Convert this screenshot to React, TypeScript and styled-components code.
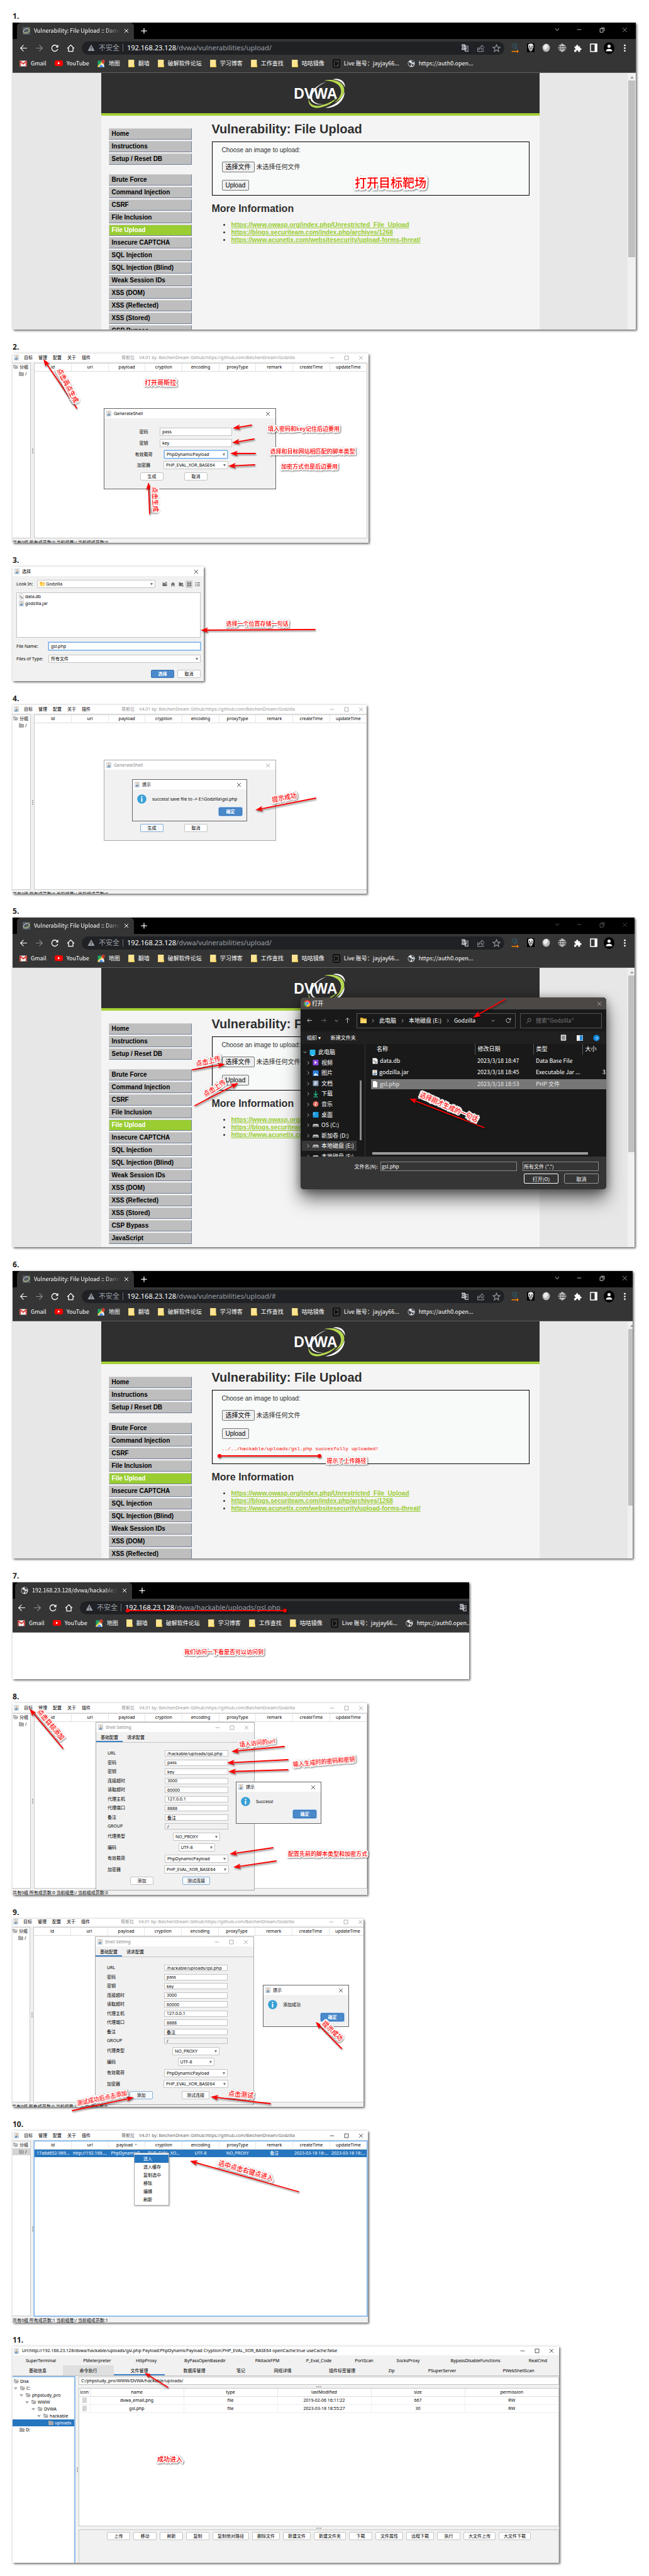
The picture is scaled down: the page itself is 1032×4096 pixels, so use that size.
import React from 'react';
import styled, { createGlobalStyle, css } from 'styled-components';

const SANS = '"Noto Sans", "Noto Sans CJK SC", sans-serif';
const NARROW = '"Noto Sans CJK SC", "Noto Sans", sans-serif';
const ARIAL = '"Liberation Sans", Arial, "Noto Sans CJK SC", sans-serif';

const Global = createGlobalStyle`
  * { box-sizing: border-box; }
  body { margin: 0; background: #fff; font-family: ${SANS}; }
  button, input, select { font: inherit; color: inherit; margin: 0; }
  svg { display: block; flex: none; }
`;

/* ---------- article ---------- */

const Article = styled.main`
  display: flex;
  flex-direction: column;
  gap: 18px;
  padding: 16px 21px 20px 20px;
`;
const StepTitle = styled.h2`
  margin: 0;
  font: bold 12px/20px ${SANS};
  color: #222;
`;
const Frame = styled.div<{ $w: number; $h: number }>`
  position: relative;
  max-width: ${p => p.$w}px;
  height: ${p => p.$h}px;
`;
const Clip = styled.div`
  position: relative;
  height: 100%;
  overflow: hidden;
  background: #fff;
  box-shadow: 2px 2px 3px rgba(0, 0, 0, 0.5), 0 0 4px rgba(0, 0, 0, 0.2);
`;
const Overlay = styled.svg`
  position: absolute;
  inset: 0;
  width: 100%;
  height: 100%;
  overflow: visible;
  pointer-events: none;
  filter: drop-shadow(1px 2px 1px rgba(0, 0, 0, 0.45));
`;
const NoteText = styled.span<{ $x: number; $y: number; $r: number; $s: number }>`
  position: absolute;
  left: ${p => p.$x}px;
  top: ${p => p.$y}px;
  transform: translate(-50%, -50%) rotate(${p => p.$r}deg);
  font: 500 ${p => p.$s}px/1 ${SANS};
  white-space: nowrap;
  color: #f00;
  -webkit-text-stroke: ${p => (p.$s > 12 ? 6 : 4)}px #fff;
  paint-order: stroke fill;
  filter: drop-shadow(1px 1px 1px rgba(0, 0, 0, 0.55));
`;

type Arrow = [number, number, number, number, number?];
type Note = [string, number, number, number?, number?];

const ArrowShape = ({ a }: { a: Arrow }) => {
  const [x1, y1, x2, y2, head = 12] = a;
  const len = Math.hypot(x2 - x1, y2 - y1);
  const deg = (Math.atan2(y2 - y1, x2 - x1) * 180) / Math.PI;
  const half = head * 0.36;
  return (
    <g transform={`translate(${x2} ${y2}) rotate(${deg})`}>
      <path d={`M${-len} 0H${-head * 0.7}`} stroke="#f00" strokeWidth="1.8" strokeLinecap="round" />
      <path d={`M0 0L${-head} ${-half}L${-head * 0.75} 0L${-head} ${half}Z`} fill="#f00" />
    </g>
  );
};

function Step({ n, w, h, arrows = [], lines = [], notes = [], children }: {
  n: number; w: number; h: number; arrows?: Arrow[]; lines?: [number, number, number][]; notes?: Note[]; children: React.ReactNode;
}) {
  return (
    <section>
      <StepTitle>{n}.</StepTitle>
      <Frame $w={w} $h={h}>
        <Clip>{children}</Clip>
        <Overlay aria-hidden="true">
          {arrows.map((a, i) => <ArrowShape key={i} a={a} />)}
          {lines.map(([x1, x2, y], i) => (
            <g key={i}>
              <path d={`M${x1} ${y}H${x2}`} stroke="#f00" strokeWidth="2" />
              <circle cx={x1} cy={y} r="3" fill="#f00" />
              <circle cx={x2} cy={y} r="3" fill="#f00" />
            </g>
          ))}
        </Overlay>
        {notes.map(([t, x, y, r = 0, s = 9]) => (
          <NoteText key={t + x} $x={x} $y={y} $r={r} $s={s}>{t}</NoteText>
        ))}
      </Frame>
    </section>
  );
}

/* ---------- browser ---------- */

const Browser = styled.div<{ $extra: number; $shift: number }>`
  display: flex;
  flex-direction: column;
  width: calc(100% + ${p => p.$extra}px);
  height: 100%;
  margin-left: ${p => -p.$shift}px;
  font-family: ${NARROW};
  color: #fff;
`;
const TabStrip = styled.div`
  display: flex;
  flex: none;
  height: 26px;
  padding-left: 7px;
  background: #000;
`;
const Tab = styled.div`
  display: flex;
  align-items: center;
  gap: 6px;
  width: 186px;
  padding: 0 8px 0 9px;
  border-radius: 6px 6px 0 0;
  background: #353535;
`;
const TabText = styled.span`
  flex: 1;
  overflow: hidden;
  white-space: nowrap;
  font-size: 9px;
  line-height: 14px;
  mask-image: linear-gradient(90deg, #000 82%, transparent 100%);
`;
const IconButton = styled.button<{ $dim?: boolean; $w?: number }>`
  display: flex;
  align-items: center;
  justify-content: center;
  flex: none;
  width: ${p => p.$w ?? 25}px;
  padding: 0;
  border: 0;
  background: none;
  color: inherit;
  opacity: ${p => (p.$dim ? 0.45 : 1)};
`;
const StripControls = styled.div<{ $dim?: boolean }>`
  display: flex;
  height: 22px;
  margin-left: auto;
  opacity: ${p => (p.$dim ? 0.45 : 1)};
`;
const Toolbar = styled.div`
  display: flex;
  flex: none;
  align-items: center;
  height: 28px;
  padding-left: 5px;
  padding-right: 5px;
  background: #353535;
`;
const Omnibox = styled.div`
  display: flex;
  flex: 1;
  align-items: center;
  height: 21px;
  margin: 0 4px 0 5px;
  padding-left: 9px;
  border-radius: 11px;
  background: #202124;
  color: #9aa0a6;
  font: 11px/16px ${SANS};
`;
const Insecure = styled.span`
  margin: 0 6px 0 6px;
  padding-right: 5px;
  border-right: 1px solid #6b6e72;
  line-height: 12px;
  white-space: nowrap;
`;
const Url = styled.span`
  flex: 1;
  white-space: nowrap;
  b { font-weight: 400; color: #fff; }
`;
const Bookmarks = styled.nav`
  display: flex;
  flex: none;
  align-items: center;
  gap: 13px;
  height: 26px;
  padding: 0 0 4px 11px;
  border-bottom: 1px solid #5f5f5f;
  background: #353535;
  font-size: 9px;
  line-height: 14px;
  a { display: flex; align-items: center; gap: 6px; color: #fff; text-decoration: none; white-space: nowrap; }
`;
const Viewport = styled.div`
  display: flex;
  flex: 1;
  min-height: 0;
  overflow: hidden;
  background: #e7e7e7;
`;
const Scrollbar = styled.div`
  position: relative;
  flex: none;
  width: 13px;
  background: #f1f1f1;
  padding: 12px 1px 0;
  &::before {
    content: '';
    position: absolute;
    top: 5px;
    left: 4px;
    border: 3px solid transparent;
    border-top: 0;
    border-bottom: 4px solid #a3a3a3;
  }
`;
const Thumb = styled.div<{ $h: number }>`
  height: ${p => p.$h}px;
  background: #c1c1c1;
`;

const I = ({ s = 12, vb = 24, children, w = 2 }: { s?: number; vb?: number; children: React.ReactNode; w?: number }) => (
  <svg width={s} height={s} viewBox={`0 0 ${vb} ${vb}`} fill="none" stroke="currentColor" strokeWidth={w} aria-hidden="true">{children}</svg>
);
const Back = () => <I s={13}><path d="M22 12H4M12 3l-9 9 9 9" /></I>;
const Forward = () => <I s={13}><path d="M2 12h18M12 3l9 9-9 9" /></I>;
const Reload = () => <I s={13} w={2.5}><path d="M20 15a9 9 0 1 1-2-9l2 2" /><path d="M21.500 2v8h-8z" fill="currentColor" stroke="none" /></I>;
const HomeIcon = () => <I s={13} w={2.4}><path d="M2 13L12 3l10 10M5.500 11v10.500h13V11" /></I>;
const WarnIcon = () => <I s={12}><path d="M12 2L1 22h22z" fill="currentColor" stroke="none" /><path d="M12 9v6M12 17v2.500" stroke="#202124" strokeWidth="2.500" /></I>;
const CloseX = ({ s = 8, w = 2 }: { s?: number; w?: number }) => <I s={s} w={w}><path d="M3 3l18 18M21 3L3 21" /></I>;
const MinIcon = () => <I s={8}><path d="M2 12h20" /></I>;
const MaxIcon = () => <I s={8}><path d="M3 3h18v18H3z" /></I>;
const RestoreIcon = () => <I s={9}><path d="M3 7h13v15H3zM8 3h13v14" /></I>;
const Chevron = () => <I s={8}><path d="M3 6l9 12 9-12" /></I>;
const GlobeIcon = () => (
  <svg width="12" height="12" viewBox="0 0 24 24" aria-hidden="true"><circle cx="12" cy="12" r="11" fill="#dfe1e5" /><path d="M3 7c5 0 4 4 8 4s2 5 0 6-1 4-3 4C4 19 1 14 3 7zM13 2c4 0 7 3 8 6-3 2-6 1-7-1s-3-3-1-5zM15 14c3-2 5 0 5 1s-3 5-5 5-2-4 0-6z" fill="#3c4043" /></svg>
);
const DvwaFav = () => (
  <svg width="12" height="12" viewBox="0 0 24 24" aria-hidden="true"><path fill="#555c66" d="M0 0h24v24H0z" /><ellipse cx="12" cy="12" rx="10" ry="7" transform="rotate(-24 12 12)" fill="none" stroke="#dfe3dc" strokeWidth="1.600" /><path d="M4 17c4 4 14 0 17-6 2-4 0-6-4-6" fill="none" stroke="#a5c940" strokeWidth="1.600" /></svg>
);
const FolderMark = () => (
  <svg width="10" height="12" viewBox="0 0 18 22" aria-hidden="true"><path d="M0 0h17v15h1v6H0z" fill="#ffe591" /><path d="M0 21h18v-6h-3v4" fill="none" stroke="#f0c63a" strokeWidth="1.500" /></svg>
);
const GmailIcon = () => (
  <svg width="12" height="10" viewBox="0 0 24 20" aria-hidden="true"><path d="M1 1h22v18H1z" fill="#f2f2f2" /><path d="M2.500 19V3L12 11l9.500-8v16" fill="none" stroke="#d93a30" strokeWidth="3.500" /></svg>
);
const YoutubeIcon = () => (
  <svg width="13" height="9" viewBox="0 0 26 18" aria-hidden="true"><rect width="26" height="18" rx="5" fill="#f00" /><path d="M10 5l7 4-7 4z" fill="#fff" /></svg>
);
const MapsIcon = () => (
  <svg width="12" height="12" viewBox="0 0 24 24" aria-hidden="true"><path fill="#1fa463" d="M1 3h20v20H1z" /><path fill="#fff" d="M1 23L18 6l4 17zM6 23l6-7 6 7z" /><path fill="#4285f4" d="M4 23l8-8 8 8z" /><path fill="#ffd04b" d="M1 23V19L14 7l3 3L3 23z" /><path d="M18 0a5 5 0 0 1 5 5c0 4-4 5-5 11-1-6-5-7-5-11a5 5 0 0 1 5-5z" fill="#ea4335" /><circle cx="18" cy="5" r="2" fill="#8b1a12" /></svg>
);
const LiveIcon = () => (
  <svg width="12" height="14" viewBox="0 0 24 28" fill="none" stroke="#000" strokeWidth="2.500" aria-hidden="true"><rect x="1.500" y="1.500" width="21" height="25" rx="3" /><path d="M9 9l7 5-7 5z" /></svg>
);
const TranslateIcon = () => (
  <svg width="13" height="13" viewBox="0 0 24 24" aria-hidden="true"><path d="M2 1h10l2 4h8v17H12l-2-5H2z" fill="#bdc1c6" /><path d="M14 7h7v13h-8l2-3z" fill="#202124" /><path d="M9 7a3.500 3.500 0 1 0 .5 3H7" fill="none" stroke="#202124" strokeWidth="1.600" /><path d="M14 11h6M17 9v2c0 3-2 4-3 5M15 12c1 2 3 4 5 5" fill="none" stroke="#bdc1c6" strokeWidth="1.400" /></svg>
);
const ShareIcon = () => <I s={13} w={1.800}><path d="M3 10v12h17v-5M6 17c0-6 3-9 9-9V3l7 7.500-7 7v-5c-4 0-7 1-9 4.500z" /></I>;
const StarIcon = () => <I s={13} w={2}><path d="M12 2l3 7 7.500.5-6 5 2 7.500-6.500-4-6.500 4 2-7.500-6-5L9 9z" /></I>;
const ParagraphIcon = () => (
  <svg width="12" height="15" viewBox="0 0 24 30" aria-hidden="true"><path d="M8 19V12a5 5 0 0 1 0-10h9v17M13 2v17" fill="none" stroke="#33505c" strokeWidth="3" /><path d="M1 24h17v-4l6 5.500-6 5.500v-4H1z" fill="#ff8000" /></svg>
);
const MaskIcon = () => (
  <svg width="12" height="14" viewBox="0 0 24 28" aria-hidden="true"><path fill="#000" d="M0 0h24v28H0z" /><path d="M4 4c4-4 12-4 16 0 1 8-1 16-8 23C5 20 3 12 4 4z" fill="#f3f3f3" /><path d="M6 8l4 1M18 8l-4 1M6 12h4M14 12h4M12 12v5M6 18c3-2 4 0 6 0s3-2 6 0M12 20v5" stroke="#000" strokeWidth="1.800" fill="none" /></svg>
);
const BallIcon = () => (
  <svg width="13" height="14" viewBox="0 0 24 26" aria-hidden="true"><ellipse cx="12" cy="13" rx="11" ry="12" fill="#b9b9b9" /><path d="M4 8c3-5 9-7 12-5-1 4 3 5 1 8s-4 2-4 7c-4 2-9-1-9-10z" fill="#ededed" /></svg>
);
const NetIcon = () => <I s={14} w={1.400}><circle cx="12" cy="12" r="10" strokeDasharray="2 1.500" /><path d="M12 1v22M2 12h20M4 6h16M4 18h16" /><ellipse cx="12" cy="12" rx="5" ry="10" /></I>;
const PuzzleIcon = () => <I s={13}><path d="M3 7h5c-2-6 7-6 5.500 0H19v5c6-1.500 6 7 0 5.500V23h-5c1-6-7-6-6 0H2v-6c5 1 5-6 1-5z" fill="currentColor" stroke="none" /></I>;
const PanelIcon = () => <svg width="12" height="14" viewBox="0 0 24 28" aria-hidden="true"><path d="M2 2h20v24H2z" fill="none" stroke="#fff" strokeWidth="3" /><path d="M15 2h8v24h-8z" fill="#fff" /></svg>;
const AvatarIcon = () => (
  <svg width="17" height="19" viewBox="0 0 34 38" aria-hidden="true"><ellipse cx="17" cy="19" rx="17" ry="19" fill="#000" /><circle cx="17" cy="13" r="5" fill="#fff" /><path d="M7 29c0-10 20-10 20 0z" fill="#fff" /></svg>
);
const DotsIcon = () => <I s={13}><g fill="currentColor" stroke="none"><circle cx="12" cy="4" r="2.500" /><circle cx="12" cy="12" r="2.500" /><circle cx="12" cy="20" r="2.500" /></g></I>;

const bookmarks: [React.ReactNode, string][] = [
  [<GmailIcon />, 'Gmail'], [<YoutubeIcon />, 'YouTube'], [<MapsIcon />, '地图'], [<FolderMark />, '翻墙'],
  [<FolderMark />, '破解软件论坛'], [<FolderMark />, '学习博客'], [<FolderMark />, '工作查找'], [<FolderMark />, '咕咕镜像'],
  [<LiveIcon />, 'Live  账号：jayjay66...'], [<GlobeIcon />, 'https://auth0.open...'],
];

function Chrome({ title, path, extra = 0, shift = 0, dim, icon = <DvwaFav />, thumb, children }: {
  title: string; path: string; extra?: number; shift?: number; dim?: boolean; icon?: React.ReactNode; thumb?: number; children?: React.ReactNode;
}) {
  return (
    <Browser $extra={extra} $shift={shift}>
      <TabStrip>
        <Tab>{icon}<TabText>{title}</TabText><IconButton $w={8} aria-label="Close tab"><CloseX w={3} /></IconButton></Tab>
        <IconButton $w={31} aria-label="New tab"><I s={10} w={3}><path d="M12 1v22M1 12h22" /></I></IconButton>
        <StripControls $dim={dim}>
          <IconButton $w={35} aria-label="Search tabs"><Chevron /></IconButton>
          <IconButton $w={36} aria-label="Minimize"><MinIcon /></IconButton>
          <IconButton $w={36} aria-label="Restore"><RestoreIcon /></IconButton>
          <IconButton $w={36} aria-label="Close"><CloseX s={9} w={1.500} /></IconButton>
        </StripControls>
      </TabStrip>
      <Toolbar>
        <IconButton aria-label="Back"><Back /></IconButton>
        <IconButton $dim aria-label="Forward"><Forward /></IconButton>
        <IconButton aria-label="Reload"><Reload /></IconButton>
        <IconButton aria-label="Home"><HomeIcon /></IconButton>
        <Omnibox>
          <WarnIcon /><Insecure>不安全</Insecure><Url><b>192.168.23.128</b>{path}</Url>
          <IconButton aria-label="Translate"><TranslateIcon /></IconButton>
          <IconButton aria-label="Share"><ShareIcon /></IconButton>
          <IconButton aria-label="Bookmark"><StarIcon /></IconButton>
        </Omnibox>
        {[<ParagraphIcon />, <MaskIcon />, <BallIcon />, <NetIcon />, <PuzzleIcon />, <PanelIcon />, <AvatarIcon />, <DotsIcon />].map((ic, i) => (
          <IconButton key={i} aria-label={`Extension ${i + 1}`}>{ic}</IconButton>
        ))}
      </Toolbar>
      <Bookmarks>{bookmarks.map(([ic, t], i) => <a key={i} href="#bookmark">{ic}{t}</a>)}</Bookmarks>
      {children && <Viewport>{children}{thumb && <Scrollbar><Thumb $h={thumb} /></Scrollbar>}</Viewport>}
    </Browser>
  );
}

/* ---------- DVWA page ---------- */

const DvwaColumn = styled.div`
  flex: 1;
  max-width: 697px;
  margin: 0 auto;
  height: 600px;
  background: #f4f4f4;
  font: 10px/12px ${ARIAL};
  color: #2f2f2f;
`;
const DvwaHeader = styled.header`
  display: flex;
  align-items: center;
  justify-content: center;
  height: 68px;
  border-bottom: 4px solid #a4cf35;
  background: #2f2f2f;
`;
const DvwaBody = styled.div`
  display: flex;
  gap: 32px;
  padding: 0 16px 0 12px;
`;
const Side = styled.nav`
  display: flex;
  flex: none;
  flex-direction: column;
  gap: 15px;
  width: 132px;
  padding-top: 20px;
`;
const SideGroup = styled.div`
  display: flex;
  flex-direction: column;
  gap: 2px;
`;
const SideLink = styled.a<{ $on?: boolean }>`
  height: 18px;
  padding-left: 4px;
  border: 1px solid;
  border-color: #cfcfcf #75809b #75809b #cfcfcf;
  background: ${p => (p.$on ? '#9acd32' : '#bebebe')};
  color: ${p => (p.$on ? '#fff' : '#000')};
  font: bold 10px/16px ${ARIAL};
  text-decoration: none;
`;
const Main = styled.div`
  flex: 1;
  padding-top: 9px;
  h1 { margin: 0 0 8px; font-size: 20px; line-height: 24px; }
  h2 { margin: 11px 0 10px; font-size: 16px; line-height: 20px; }
  ul { margin: 0; padding-left: 31px; }
  li a { color: #9acd32; font-weight: bold; }
`;
const UploadBox = styled.form<{ $tall?: boolean }>`
  display: flex;
  flex-direction: column;
  align-items: flex-start;
  gap: 12px;
  padding: 7px 15px ${p => (p.$tall ? 19 : 7)}px;
  border: 1px solid #000;
  background: #f8faf9;
`;
const plate = css`
  display: inline-block;
  height: 17px;
  padding: 0 5px;
  border: 1px solid #767676;
  border-radius: 2px;
  background: #efefef;
  color: #000;
  font: 10px/15px ${ARIAL};
`;
const FileRow = styled.div`
  display: flex;
  align-items: center;
  gap: 3px;
  white-space: nowrap;
  label { ${plate} }
  input { position: absolute; width: 1px; height: 1px; opacity: 0; }
`;
const UploadButton = styled.button`${plate}`;
const Result = styled.output`
  font: 8px/8px "Liberation Mono", monospace;
  color: #f00;
  white-space: nowrap;
`;

const Logo = () => (
  <svg width="93" height="57" viewBox="0 0 540 330" role="img" aria-label="DVWA">
    <path d="M330 58C240 80 175 150 176 205c2 45 60 68 125 62-60-2-105-22-108-62C190 150 250 85 330 58z" fill="#fff" />
    <path d="M300 48c90-22 188 5 190 85 1 50-40 95-92 118 40-30 66-72 62-112-6-62-76-92-160-91z" fill="#b5d84f" />
    <path d="M160 215c12 60 60 72 110 62 70-14 130-50 160-78-40 55-110 92-180 100-60 5-96-30-90-84z" fill="#b5d84f" />
    <path d="M385 36c50-18 116 10 112 74-16-44-56-70-112-74zM493 150c2 80-80 155-178 148 90-22 150-70 178-148z" fill="#fff" />
    <text x="24" y="213" fontFamily="Liberation Sans, Arial, sans-serif" fontWeight="700" fontSize="134" fill="#fff">DVWA</text>
  </svg>
);

const sideTop = ['Home', 'Instructions', 'Setup / Reset DB'];
const sideMain = ['Brute Force', 'Command Injection', 'CSRF', 'File Inclusion', 'File Upload', 'Insecure CAPTCHA', 'SQL Injection',
  'SQL Injection (Blind)', 'Weak Session IDs', 'XSS (DOM)', 'XSS (Reflected)', 'XSS (Stored)', 'CSP Bypass', 'JavaScript'];
const links = ['https://www.owasp.org/index.php/Unrestricted_File_Upload', 'https://blogs.securiteam.com/index.php/archives/1268',
  'https://www.acunetix.com/websitesecurity/upload-forms-threat/'];

function Dvwa({ id, result }: { id: string; result?: string }) {
  return (
    <DvwaColumn>
      <DvwaHeader><Logo /></DvwaHeader>
      <DvwaBody>
        <Side>
          {[sideTop, sideMain].map((g, i) => (
            <SideGroup key={i}>{g.map(t => <SideLink key={t} href="#page" $on={t === 'File Upload'}>{t}</SideLink>)}</SideGroup>
          ))}
        </Side>
        <Main>
          <h1>Vulnerability: File Upload</h1>
          <UploadBox $tall={!!result} onSubmit={e => e.preventDefault()}>
            <span>Choose an image to upload:</span>
            <FileRow><label htmlFor={id}>选择文件</label><input id={id} type="file" /><span>未选择任何文件</span></FileRow>
            <UploadButton type="submit">Upload</UploadButton>
            {result && <Result>{result}</Result>}
          </UploadBox>
          <h2>More Information</h2>
          <ul>{links.map(l => <li key={l}><a href={l}>{l}</a></li>)}</ul>
        </Main>
      </DvwaBody>
    </DvwaColumn>
  );
}

/* ---------- Swing widgets ---------- */

const JavaIcon = () => (
  <svg width="8" height="9" viewBox="0 0 16 18" aria-hidden="true"><rect x=".5" y=".5" width="15" height="17" rx="2" fill="#e4ebf1" stroke="#8fa3b5" /><path d="M9 2c-4 3 1 4-2 7M11 5c-3 2 0 3-2 4" stroke="#e9801a" strokeWidth="1.500" fill="none" /><path d="M4 11h7M4 13h7M3 15.500h9M11 10c3 0 2 3 0 3" stroke="#3f6b93" strokeWidth="1.300" fill="none" /></svg>
);
const FolderIcon = ({ open }: { open?: boolean }) => (
  <svg width="8" height="7" viewBox="0 0 16 14" fill="#aaa" aria-hidden="true">
    {open ? <path d="M0 0h6l2 2h6v2H4L1 11H0zM5 5h11l-2.500 8H2z" /> : <path d="M0 0h6l2 2h8v12H0z" />}
  </svg>
);

const Window = styled.div<{ $extra: number; $dx: number; $dy: number }>`
  display: flex;
  flex-direction: column;
  width: calc(100% + ${p => p.$extra}px);
  margin: ${p => p.$dy}px 0 0 ${p => p.$dx}px;
  background: #f1f1f1;
  color: #000;
  font: 7px/11px ${SANS};
`;
const WindowBar = styled.div<{ $h?: number }>`
  display: flex;
  align-items: center;
  height: ${p => p.$h ?? 13}px;
  padding-left: 2px;
  background: #fff;
`;
const MenuBar = styled.div`
  display: flex;
  gap: 9px;
  width: 163px;
  padding-left: 8px;
`;
const Plain = styled.button`
  padding: 0;
  border: 0;
  background: none;
  font: 7px/11px ${SANS};
  white-space: nowrap;
`;
const WindowTitle = styled.span<{ $c?: string; $left?: number }>`
  margin-left: ${p => p.$left ?? 0}px;
  font: 7px/12px ${SANS};
  color: ${p => p.$c ?? '#999'};
  white-space: pre;
`;
const Controls = styled.div<{ $gap?: number; $c?: string }>`
  display: flex;
  gap: ${p => p.$gap ?? 15}px;
  margin-left: auto;
  padding-right: 8px;
  color: ${p => p.$c ?? '#888'};
`;
const Panes = styled.div`
  display: flex;
  height: 279px;
  margin-top: 2px;
  padding-right: 2px;
`;
const Tree = styled.ul`
  width: 29px;
  margin: 0;
  padding: 0;
  border: 1px solid #c8c8c8;
  border-left: 0;
  background: #fff;
  list-style: none;
`;
const TreeRow = styled.li<{ $in?: number; $bg?: string; $c?: string }>`
  display: flex;
  align-items: center;
  gap: 2px;
  height: 11px;
  padding-left: ${p => p.$in ?? 1}px;
  background: ${p => p.$bg ?? 'none'};
  color: ${p => p.$c ?? 'inherit'};
  white-space: nowrap;
`;
const Splitter = styled.div`
  display: flex;
  align-items: center;
  justify-content: center;
  width: 5px;
  color: #aaa;
`;
const Grips = ({ across }: { across?: boolean }) => across
  ? <svg width="8" height="2" viewBox="0 0 8 2" fill="#aaa" aria-hidden="true"><path d="M0 0h2v2H0zM3 0h2v2H3zM6 0h2v2H6z" /></svg>
  : <svg width="2" height="8" viewBox="0 0 2 8" fill="#aaa" aria-hidden="true"><path d="M0 0h2v2H0zM0 3h2v2H0zM0 6h2v2H0z" /></svg>;
const TablePane = styled.div<{ $focus?: boolean }>`
  flex: 1;
  overflow: hidden;
  border: 1px solid ${p => (p.$focus ? '#7db0e8' : '#c8c8c8')};
  box-shadow: ${p => (p.$focus ? '0 0 0 1px #a9cdf2' : 'none')};
  background: #fff;
`;
const Table = styled.table`
  width: 100%;
  border-collapse: collapse;
  table-layout: fixed;
  font: 7px/11px ${SANS};
  text-align: center;
  th { height: 12px; padding: 0; border-bottom: 1px solid #ddd; border-right: 1px solid #e6e6e6; font-weight: 400; }
  td { height: 13px; padding: 0 1px; overflow: hidden; text-overflow: ellipsis; white-space: nowrap; }
  tr > :last-child { border-right: 0; }
`;
const SelectedRow = styled.tr`
  background: #2675bf;
  color: #fff;
`;
const SortMark = styled.i`
  display: inline-block;
  margin-left: 3px;
  vertical-align: 2px;
  border: 2px solid transparent;
  border-top: 0;
  border-bottom: 3px solid #aaa;
`;
const Status = styled.div`
  height: 14px;
  font-size: 7px;
  line-height: 14px;
  white-space: nowrap;
`;

const cols = ['id', 'url', 'payload', 'cryption', 'encoding', 'proxyType', 'remark', 'createTime', 'updateTime'];
const shellRow = ['17a6d652-989...', 'http://192.168....', 'PhpDynamicP...', 'PHP_EVAL_XO...', 'UTF-8', 'NO_PROXY', '备注', '2023-03-18 18:...', '2023-03-18 18:...'];

function Godzilla({ extra = 0, dx = 0, dy = 0, active, members = 0, children }: {
  extra?: number; dx?: number; dy?: number; active?: boolean; members?: number; children?: React.ReactNode;
}) {
  return (
    <>
      <Window $extra={extra} $dx={dx} $dy={dy}>
        <WindowBar>
          <JavaIcon />
          <MenuBar>{['目标', '管理', '配置', '关于', '插件'].map(t => <Plain key={t}>{t}</Plain>)}</MenuBar>
          <WindowTitle $c={active ? '#666' : '#999'}>{'哥斯拉    V4.01 by: BeichenDream Github:https://github.com/BeichenDream/Godzilla'}</WindowTitle>
          <Controls $c={active ? '#000' : '#888'}><MinIcon /><MaxIcon /><CloseX /></Controls>
        </WindowBar>
        <Panes>
          <Tree>
            <TreeRow><FolderIcon open />分组</TreeRow>
            <TreeRow $in={10} $bg={active ? '#d4d4d4' : undefined}><FolderIcon />/</TreeRow>
          </Tree>
          <Splitter><Grips /></Splitter>
          <TablePane $focus={active}>
            <Table>
              <thead><tr>{cols.map(c => <th key={c} scope="col">{c}{active && c === 'payload' && <SortMark />}</th>)}</tr></thead>
              {active && <tbody><SelectedRow>{shellRow.map((c, i) => <td key={i}>{c}</td>)}</SelectedRow></tbody>}
            </Table>
          </TablePane>
        </Panes>
        <Status>共有0组 所有成员数:{members} 当前组是:/ 当前组成员数:{members}</Status>
      </Window>
      {children}
    </>
  );
}

const DialogBox = styled.div<{ $x: number; $y: number; $w: number; $h: number; $strong?: boolean }>`
  position: absolute;
  left: ${p => p.$x}px;
  top: ${p => p.$y}px;
  display: flex;
  flex-direction: column;
  width: ${p => p.$w}px;
  height: ${p => p.$h}px;
  border: 1px solid ${p => (p.$strong ? '#666' : '#aaa')};
  background: #f1f1f1;
  color: #000;
  font: 7px/11px ${SANS};
`;
const DialogBar = styled(WindowBar)`
  flex: none;
  padding-left: 3px;
`;
function Dialog({ title, x, y, w, h, muted, full, children }: {
  title: string; x: number; y: number; w: number; h: number; muted?: boolean; full?: boolean; children: React.ReactNode;
}) {
  return (
    <DialogBox role="dialog" aria-label={title} $x={x} $y={y} $w={w} $h={h} $strong={!muted}>
      <DialogBar $h={15}>
        <JavaIcon /><WindowTitle $left={4} $c={muted ? '#888' : '#000'}>{title}</WindowTitle>
        <Controls $c={muted ? '#888' : '#000'}>{full && <><MinIcon /><MaxIcon /></>}<CloseX /></Controls>
      </DialogBar>
      {children}
    </DialogBox>
  );
}

const Field = styled.input<{ $h?: number; $focus?: boolean }>`
  width: 100%;
  height: ${p => p.$h ?? 13}px;
  padding: 0 3px;
  border: 1px solid ${p => (p.$focus ? '#7db0e8' : '#c4c4c4')};
  box-shadow: ${p => (p.$focus ? '0 0 0 1px #a9cdf2' : 'none')};
  outline: 0;
  background: #fff;
  font: 7px/8px ${SANS};
  &:disabled { background: #f1f1f1; color: #000; }
`;
const SelectWrap = styled.span<{ $w?: number; $focus?: boolean }>`
  position: relative;
  display: block;
  width: ${p => (p.$w ? `${p.$w}px` : '100%')};
  &::after {
    content: '';
    position: absolute;
    right: 4px;
    top: 5px;
    border: 2px solid transparent;
    border-bottom: 0;
    border-top: 4px solid #777;
  }
  select {
    display: block;
    width: 100%;
    height: 13px;
    padding: 0 3px;
    appearance: none;
    outline: 0;
    border: 1px solid ${p => (p.$focus ? '#7db0e8' : '#c4c4c4')};
    box-shadow: ${p => (p.$focus ? '0 0 0 1px #a9cdf2' : 'none')};
    border-radius: 1px;
    background: #fff;
    font: 7px/11px ${SANS};
  }
`;
const Select = ({ id, value, w, focus, label }: { id?: string; value: string; w?: number; focus?: boolean; label?: string }) => (
  <SelectWrap $w={w} $focus={focus}><select id={id} aria-label={label} defaultValue={value}><option>{value}</option></select></SelectWrap>
);
const Btn = styled.button<{ $w?: number; $primary?: boolean; $ring?: boolean; $focus?: boolean }>`
  min-width: ${p => p.$w ?? 37}px;
  height: 13px;
  padding: 0 7px;
  border: 1px solid ${p => (p.$primary ? '#3d75b3' : p.$focus ? '#89b0d4' : '#c4c4c4')};
  border-radius: 2px;
  background: ${p => (p.$primary ? '#4a89ca' : p.$focus ? '#f5f9fd' : '#fff')};
  box-shadow: ${p => (p.$ring ? '0 0 0 1px #97c3f3' : 'none')};
  color: ${p => (p.$primary ? '#fff' : '#000')};
  font: ${p => (p.$primary ? 700 : 400)} 7px/11px ${SANS};
  white-space: nowrap;
`;

const GenGrid = styled.form`
  display: grid;
  grid-template-columns: 49px 117px;
  align-content: space-between;
  align-items: center;
  justify-items: center;
  column-gap: 0;
  height: 84px;
  margin: 15px 0 0 38px;
`;
const GenLabel = styled.label`white-space: nowrap;`;
const GenInputCell = styled.div`width: 115px;`;
const GenButtons = styled.div`
  grid-column: 1 / -1;
  display: flex;
  gap: 33px;
  width: 127px;
  margin-right: 1px;
`;
const Spacer = styled.div`flex: 1;`;
const BottomButtons = styled.div`
  display: flex;
  gap: 33px;
  padding: 0 0 13px 57px;
`;

const TipBody = styled.div`
  display: flex;
  gap: 9px;
  align-items: center;
  padding: 8px 0 0 7px;
  font: 7px/12px ${SANS};
  white-space: nowrap;
`;
const TipActions = styled.div`
  display: flex;
  justify-content: flex-end;
  margin-top: auto;
  padding: 0 7px 8px 0;
`;
const Info = () => (
  <svg width="15" height="15" viewBox="0 0 30 30" aria-hidden="true"><circle cx="15" cy="15" r="14.500" fill="#389fd6" /><path d="M13 6h4v4h-4zM13 12h4v12h-4z" fill="#fff" /></svg>
);
const Tip = ({ x, y, w, text }: { x: number; y: number; w: number; text: string }) => (
  <Dialog title="提示" x={x} y={y} w={w} h={67}>
    <TipBody><Info />{text}</TipBody>
    <TipActions><Btn $primary $ring>确定</Btn></TipActions>
  </Dialog>
);

/* ---------- step 3: file chooser ---------- */

const Chooser = styled.div`
  display: flex;
  flex-direction: column;
  height: 100%;
  background: #f1f1f1;
  font: 7px/11px ${SANS};
`;
const ChooserBody = styled.div`
  display: flex;
  flex: 1;
  flex-direction: column;
  gap: 7px;
  padding: 6px 5px 5px 6px;
`;
const ChooserRow = styled.div<{ $label?: number }>`
  display: flex;
  align-items: center;
  label { flex: none; width: ${p => p.$label ?? 51}px; }
`;
const FolderSelect = styled.div`
  position: relative;
  width: 188px;
  select { padding-left: 13px; }
  > svg { position: absolute; z-index: 1; left: 4px; top: 3px; }
`;
const ToolIcons = styled.div`
  display: flex;
  gap: 2px;
  margin-left: auto;
`;
const ToolIcon = styled.button<{ $on?: boolean }>`
  display: flex;
  align-items: center;
  justify-content: center;
  width: 11px;
  height: 12px;
  padding: 0;
  border: 0;
  border-radius: 2px;
  background: ${p => (p.$on ? '#cfcfcf' : 'none')};
`;
const FileList = styled.ul`
  flex: 1;
  margin: 0;
  padding: 0 3px;
  border: 1px solid #c4c4c4;
  background: #fff;
  list-style: none;
  li { display: flex; align-items: center; gap: 2px; height: 11px; }
`;
const ChooserActions = styled.div`
  display: flex;
  justify-content: flex-end;
  gap: 5px;
  padding-top: 4px;
`;
const DbIcon = ({ s = 8 }: { s?: number }) => <svg width={s} height={s + 1} viewBox="0 0 16 18" aria-hidden="true"><path d="M1 1h10l4 4v12H1z" fill="#fff" stroke="#999" /><circle cx="6" cy="9" r="2" fill="none" stroke="#667" strokeWidth="1.600" /><circle cx="10" cy="13" r="2" fill="none" stroke="#667" strokeWidth="1.600" /></svg>;
const YellowFolder = ({ s = 8 }: { s?: number }) => <svg width={s} height={s - 1} viewBox="0 0 16 14" aria-hidden="true"><path d="M0 0h6l2 2h8v12H0z" fill="#f5b83d" /><path d="M0 5h16v9H0z" fill="#ffd869" /></svg>;
const G = ({ d }: { d: string }) => <svg width="8" height="8" viewBox="0 0 16 16" aria-hidden="true"><path d={d} fill="#6e6e6e" /></svg>;

function FileChooser() {
  return (
    <Chooser>
      <DialogBar $h={15}><JavaIcon /><WindowTitle $left={4} $c="#000">选择</WindowTitle><Controls $c="#000"><CloseX /></Controls></DialogBar>
      <ChooserBody>
        <ChooserRow $label={33}>
          <label htmlFor="look-in">Look In:</label>
          <FolderSelect><YellowFolder /><Select id="look-in" value="Godzilla" /></FolderSelect>
          <ToolIcons>
            <ToolIcon aria-label="Up"><G d="M1 3h5l1 2h3v4h3V6h2v8H1zM12 0l4 4h-3v4h-2V4H8z" /></ToolIcon>
            <ToolIcon aria-label="Home"><G d="M8 1l7 7h-2v7h-3v-4H6v4H3V8H1z" /></ToolIcon>
            <ToolIcon aria-label="New folder"><G d="M1 2h5l2 2h6v5h-3v2H9v3H1zM12 10h2v2h2v2h-2v2h-2v-2h-2v-2h2z" /></ToolIcon>
            <ToolIcon $on aria-label="List"><G d="M2 2h5v5H2zM9 2h5v5H9zM2 9h5v5H2zM9 9h5v5H9z" /></ToolIcon>
            <ToolIcon aria-label="Details"><G d="M0 2h3v2H0zM5 2h11v2H5zM0 7h3v2H0zM5 7h11v2H5zM0 12h3v2H0zM5 12h11v2H5z" /></ToolIcon>
          </ToolIcons>
        </ChooserRow>
        <FileList><li><DbIcon />data.db</li><li><JavaIcon />godzilla.jar</li></FileList>
        <ChooserRow><label htmlFor="file-name">File Name:</label><Field id="file-name" $focus defaultValue="gsl.php" /></ChooserRow>
        <ChooserRow><label htmlFor="file-type">Files of Type:</label><Select id="file-type" value="所有文件" /></ChooserRow>
        <ChooserActions><Btn $primary>选择</Btn><Btn>取消</Btn></ChooserActions>
      </ChooserBody>
    </Chooser>
  );
}

/* ---------- step 5: system open dialog ---------- */

const OpenDialog = styled.div`
  position: absolute;
  left: 458px;
  top: 127px;
  display: flex;
  flex-direction: column;
  width: 486px;
  height: 305px;
  overflow: hidden;
  border-radius: 5px;
  background: #191919;
  color: #fff;
  font: 9px/14px ${NARROW};
`;
const OpenShadow = styled.div`
  position: absolute;
  left: 458px;
  top: 127px;
  width: 486px;
  height: 305px;
  border-radius: 5px;
  box-shadow: 0 16px 28px rgba(0, 0, 0, 0.55), 0 2px 14px rgba(0, 0, 0, 0.4);
`;
const OpenBar = styled.div`
  display: flex;
  flex: none;
  align-items: center;
  gap: 2px;
  height: 19px;
  padding: 0 7px 0 5px;
  background: #4b4845;
  button { margin-left: auto; }
`;
const OpenNav = styled.div`
  display: flex;
  flex: none;
  align-items: center;
  height: 35px;
  padding: 0 7px 0 4px;
`;
const PathBox = styled.div`
  display: flex;
  flex: 1;
  align-items: center;
  gap: 7px;
  height: 24px;
  margin: 0 7px 0 5px;
  padding-left: 5px;
  border: 1px solid #555;
  white-space: nowrap;
  span:nth-of-type(4) { margin-right: auto; }
`;
const SearchBox = styled.label`
  display: flex;
  align-items: center;
  gap: 6px;
  width: 130px;
  height: 24px;
  padding-left: 8px;
  border: 1px solid #555;
  color: #888;
  input { width: 90px; padding: 0; border: 0; background: none; }
  input::placeholder { color: #777; }
`;
const OpenCommands = styled.div`
  display: flex;
  flex: none;
  align-items: center;
  gap: 16px;
  height: 20px;
  padding: 0 10px;
  background: #202020;
  font-size: 8px;
`;
const Small = styled.button`
  padding: 0;
  border: 0;
  background: none;
  font: 8px/12px ${NARROW};
`;
const OpenPanes = styled.div`
  display: flex;
  flex: none;
  align-items: flex-start;
  height: 179px;
  overflow: hidden;
`;
const Places = styled.ul`
  display: grid;
  grid-auto-rows: 1fr;
  width: 89px;
  height: 187px;
  margin: 0;
  padding: 5px 0 0 2px;
  list-style: none;
`;
const Place = styled.li<{ $top?: boolean; $on?: boolean }>`
  display: flex;
  align-items: center;
  gap: 4px;
  padding-left: ${p => (p.$top ? 2 : 7)}px;
  background: ${p => (p.$on ? '#383838' : 'none')};
  white-space: nowrap;
`;
const PlaceBar = styled.div`
  width: 14px;
  height: 100%;
  padding-top: 58px;
  border-right: 1px solid #333;
  &::before { content: ''; display: block; width: 3px; height: 95px; margin-left: 5px; background: #8a8a8a; }
`;
const Files = styled.div`
  display: flex;
  flex: 1;
  flex-direction: column;
  height: 100%;
  overflow: hidden;
  padding-left: 9px;
`;
const FileTable = styled.table`
  width: 409px;
  border-collapse: collapse;
  table-layout: fixed;
  font: 9px/14px ${NARROW};
  text-align: left;
  th { height: 18px; padding: 0 0 0 4px; border-right: 1px solid #555; font-weight: 400; }
  th:first-child, td:first-child { padding-left: 9px; }
  td { height: 18px; padding: 0 0 0 4px; white-space: nowrap; overflow: hidden; }
  td:last-child { padding-left: 0; text-align: right; }
`;
const FileRows = styled.tbody`
  tr { border-top: 3px solid #191919; }
`;
const NameCell = styled.span`
  display: flex;
  align-items: center;
  gap: 3px;
  margin-left: -7px;
`;
const FileLine = styled.tr<{ $on?: boolean }>`
  td { background: ${p => (p.$on ? '#777' : 'none')}; color: ${p => (p.$on ? '#e4e4e4' : '#fff')}; }
`;
const HScroll = styled.div`
  width: 343px;
  height: 4px;
  margin: auto 0 3px 2px;
  background: #9a9a9a;
`;
const OpenFooter = styled.div`
  display: flex;
  flex: 1;
  flex-direction: column;
  gap: 4px;
  align-items: flex-end;
  padding: 8px 12px 0 0;
  background: #353535;
  font: 8px/13px ${NARROW};
`;
const FooterRow = styled.div`
  display: flex;
  gap: 9px;
`;
const DarkSelect = styled.select<{ $w: number }>`
  width: ${p => p.$w}px;
  height: 15px;
  padding: 0 1px;
  appearance: none;
  border: 1px solid #888;
  border-radius: 0;
  background: #353535;
  color: #fff;
  font: 8px/13px ${NARROW};
`;
const DarkInputLabel = styled.label`
  display: flex;
  gap: 4px;
  align-items: center;
`;
const DarkButton = styled.button<{ $main?: boolean }>`
  width: 55px;
  height: 16px;
  padding: 0;
  border: 1px solid ${p => (p.$main ? '#fff' : '#999')};
  border-radius: 2px;
  background: #353535;
  font: 8px/13px ${NARROW};
`;
const ChromeLogo = () => (
  <svg width="11" height="11" viewBox="0 0 24 24" aria-hidden="true"><circle cx="12" cy="12" r="12" fill="#ea4335" /><path d="M12 12L2 6a12 12 0 0 0 8 18z" fill="#34a853" /><path d="M12 12h11.500A12 12 0 0 1 10 24z" fill="#fbbc05" /><circle cx="12" cy="12" r="5.500" fill="#4285f4" stroke="#fff" strokeWidth="1.500" /></svg>
);
const square = (bg: string, d: string) => <svg width="10" height="11" viewBox="0 0 20 22" aria-hidden="true"><rect x="1" y="2" width="18" height="18" rx="2" fill={bg} /><path d={d} fill="#fff" /></svg>;
const drive = <svg width="10" height="8" viewBox="0 0 20 16" aria-hidden="true"><path d="M3 4h14l3 5v5H0V9z" fill="#b9b9b9" /><path d="M1 10h18v3H1z" fill="#555" /><path d="M14 11h3v1h-3z" fill="#4f8" /></svg>;
const places: [React.ReactNode, string][] = [
  [square('#29b6e8', 'M6 20h8v2H6z'), '此电脑'],
  [square('#8b46d8', 'M7 6l7 5-7 5z'), '视频'],
  [square('#2e7ddb', 'M3 18l6-8 4 5 2-2 3 5z'), '图片'],
  [square('#7e93ac', 'M5 6h10v2H5zM5 10h10v2H5zM5 14h7v2H5z'), '文档'],
  [<svg width="10" height="11" viewBox="0 0 20 22" fill="none" stroke="#24c48a" strokeWidth="2.500" aria-hidden="true"><path d="M10 1v14M4 10l6 6 6-6M3 20h14" /></svg>, '下载'],
  [<svg width="10" height="11" viewBox="0 0 20 22" aria-hidden="true"><circle cx="10" cy="11" r="9" fill="#e0695c" /><path d="M9 6h4v2h-2v6a2 2 0 1 1-2-2z" fill="#fff" /></svg>, '音乐'],
  [square('#1d9be0', 'M3 5h3v2H3zM3 9h3v2H3z'), '桌面'],
  [drive, 'OS (C:)'], [drive, '新加卷 (D:)'], [drive, '本地磁盘 (E:)'], [drive, '本地磁盘 (F:)'],
];
const Caret = ({ down }: { down?: boolean }) => <I s={6} w={2.500}><path d={down ? 'M3 7l9 10 9-10' : 'M8 2l9 10-9 10'} /></I>;

function SystemOpen() {
  return (
    <>
      <OpenShadow />
      <OpenDialog role="dialog" aria-label="打开">
        <OpenBar><ChromeLogo />打开<IconButton $w={8} aria-label="关闭"><CloseX w={1.500} /></IconButton></OpenBar>
        <OpenNav>
          <IconButton $w={20} aria-label="后退"><I s={9}><path d="M22 12H3M10 4l-8 8 8 8" /></I></IconButton>
          <IconButton $w={24} $dim aria-label="前进"><I s={9}><path d="M2 12h19M14 4l8 8-8 8" /></I></IconButton>
          <IconButton $w={17} aria-label="最近"><Caret down /></IconButton>
          <IconButton $w={19} aria-label="上级"><I s={9}><path d="M12 23V2M4 10l8-8 8 8" /></I></IconButton>
          <PathBox>
            <YellowFolder s={10} /><Caret /><span>此电脑</span><Caret /><span>本地磁盘 (E:)</span><Caret /><span>Godzilla</span><span />
            <IconButton $w={12} aria-label="历史"><Caret down /></IconButton>
            <IconButton $w={22} aria-label="刷新"><I s={9}><path d="M20 14a9 9 0 1 1-2-8l3 3M21 2v7h-7" /></I></IconButton>
          </PathBox>
          <SearchBox><I s={10}><circle cx="14" cy="9" r="6" /><path d="M10 14l-8 8" /></I><input aria-label="搜索" placeholder='搜索"Godzilla"' /></SearchBox>
        </OpenNav>
        <OpenCommands>
          <Small>组织 ▾</Small><Small>新建文件夹</Small><Spacer />
          <I s={10}><path d="M3 2h18v20H3z" fill="#ccc" /><path d="M6 7h12M6 12h12M6 17h12" stroke="#333" /></I>
          <svg width="10" height="9" viewBox="0 0 20 18" aria-hidden="true"><path d="M0 0h20v18H0z" fill="#eee" /><path d="M10 1h9v16h-9z" fill="#2a8ad4" /></svg>
          <svg width="11" height="11" viewBox="0 0 22 22" aria-hidden="true"><circle cx="11" cy="11" r="10" fill="#0f8ae0" /><text x="7" y="17" fontSize="16" fill="#fff" fontFamily="Liberation Sans, sans-serif">?</text></svg>
        </OpenCommands>
        <OpenPanes>
          <Places>
            {places.map(([ic, t], i) => <Place key={t} $top={i === 0} $on={i === 9}><Caret down={i === 0} />{ic}{t}</Place>)}
          </Places>
          <PlaceBar />
          <Files>
            <FileTable>
              <colgroup><col width="165" /><col width="93" /><col width="78" /><col width="73" /></colgroup>
              <thead><tr><th scope="col">名称</th><th scope="col">修改日期</th><th scope="col">类型</th><th scope="col">大小</th></tr></thead>
              <FileRows>
                <FileLine><td><NameCell><DbIcon s={9} />data.db</NameCell></td><td>2023/3/18 18:47</td><td>Data Base File</td><td>40 KB</td></FileLine>
                <FileLine><td><NameCell><JavaIcon />godzilla.jar</NameCell></td><td>2023/3/18 18:45</td><td>Executable Jar ...</td><td>31,115 KB</td></FileLine>
                <FileLine $on><td><NameCell><svg width="9" height="10" viewBox="0 0 18 20" aria-hidden="true"><path d="M2 0h9l5 5v15H2z" fill="#fff" /></svg>gsl.php</NameCell></td><td>2023/3/18 18:53</td><td>PHP 文件</td><td>1 KB</td></FileLine>
              </FileRows>
            </FileTable>
            <HScroll />
          </Files>
        </OpenPanes>
        <OpenFooter>
          <FooterRow>
            <DarkInputLabel>文件名(N):<DarkSelect $w={217}><option>gsl.php</option></DarkSelect></DarkInputLabel>
            <DarkSelect $w={121} aria-label="文件类型"><option>所有文件 (*.*)</option></DarkSelect>
          </FooterRow>
          <FooterRow><DarkButton $main>打开(O)</DarkButton><DarkButton>取消</DarkButton></FooterRow>
        </OpenFooter>
      </OpenDialog>
    </>
  );
}

/* ---------- steps 8 and 9: shell settings ---------- */

const TabRow = styled.div`
  display: flex;
  flex: none;
  height: 17px;
  border-bottom: 1px solid #c4c4c4;
`;
const TabButton = styled.button<{ $on?: boolean }>`
  width: 42px;
  padding: 0;
  border: 0;
  box-shadow: ${p => (p.$on ? 'inset 0 -2px #4083c9' : 'none')};
  background: none;
  font: 7px/11px ${SANS};
`;
const SettingGrid = styled.form`
  display: grid;
  grid-template-columns: 90px 103px;
  align-content: space-between;
  align-items: center;
  height: 214px;
  margin: 12px 0 0 18px;
  > :nth-child(even) { justify-self: center; }
`;
const InputCell = styled.div`
  display: flex;
  width: 101px;
`;
const SettingLabel = styled.label`
  line-height: 10px;
  white-space: nowrap;
`;
const SettingButtons = styled.div`
  grid-column: 1 / -1;
  display: flex;
  gap: 46px;
  padding-left: 36px;
`;
const fields: [string, string][] = [['URL', '/hackable/uploads/gsl.php'], ['密码', 'pass'], ['密钥', 'key'], ['连接超时', '3000'], ['读取超时', '60000'],
  ['代理主机', '127.0.0.1'], ['代理端口', '8888'], ['备注', '备注'], ['GROUP', '/']];
const combos: [string, string, number][] = [['代理类型', 'NO_PROXY', 75], ['编码', 'UTF-8', 58], ['有效载荷', 'PhpDynamicPayload', 101], ['加密器', 'PHP_EVAL_XOR_BASE64', 103]];

function ShellSetting({ id, x, y, focus }: { id: string; x: number; y: number; focus: 'add' | 'test' }) {
  return (
    <Dialog title="Shell Setting" x={x} y={y} w={253} h={268} muted full>
      <TabRow role="tablist"><TabButton role="tab" $on>基础配置</TabButton><TabButton role="tab">请求配置</TabButton></TabRow>
      <SettingGrid onSubmit={e => e.preventDefault()}>
        {fields.map(([l, v]) => (
          <React.Fragment key={l}>
            <SettingLabel htmlFor={id + l}>{l}</SettingLabel><InputCell><Field id={id + l} $h={10} defaultValue={v} disabled={l === 'GROUP'} /></InputCell>
          </React.Fragment>
        ))}
        {combos.map(([l, v, w]) => (
          <React.Fragment key={l}><SettingLabel htmlFor={id + l}>{l}</SettingLabel><Select id={id + l} value={v} w={w} /></React.Fragment>
        ))}
        <SettingButtons><Btn type="button" $focus={focus === 'add'}>添加</Btn><Btn type="button" $focus={focus === 'test'}>测试连接</Btn></SettingButtons>
      </SettingGrid>
    </Dialog>
  );
}

/* ---------- step 10: context menu ---------- */

const Menu = styled.ul`
  position: absolute;
  left: 193px;
  top: 35px;
  width: 56px;
  margin: 0;
  padding: 2px 0;
  border: 1px solid #aaa;
  background: #fff;
  box-shadow: 1px 1px 2px rgba(0, 0, 0, 0.3);
  list-style: none;
`;
const MenuItem = styled.button<{ $on?: boolean }>`
  display: block;
  width: 100%;
  height: 13px;
  padding: 0 0 0 14px;
  border: 0;
  background: ${p => (p.$on ? '#2675bf' : 'none')};
  color: ${p => (p.$on ? '#fff' : '#000')};
  font: 7px/13px ${SANS};
  text-align: left;
`;

/* ---------- step 11: file manager ---------- */

const Manager = styled.div`
  display: flex;
  flex-direction: column;
  height: 100%;
  background: #f1f1f1;
  font: 7px/11px ${SANS};
`;
const ToolTabs = styled.div<{ $last?: boolean }>`
  display: flex;
  flex: none;
  height: ${p => (p.$last ? 17 : 16)}px;
  border-bottom: ${p => (p.$last ? '1px solid #c4c4c4' : '0')};
`;
const ToolTab = styled.button<{ $g: number; $hover?: boolean; $on?: boolean }>`
  flex: ${p => p.$g} 1 0;
  min-width: 0;
  padding: 0;
  border: 0;
  box-shadow: ${p => (p.$on ? 'inset 0 -2px #4083c9' : 'none')};
  background: ${p => (p.$hover ? '#dfdfdf' : 'none')};
  font: 7px/11px ${SANS};
  white-space: nowrap;
`;
const ManagerBody = styled.div`
  display: flex;
  flex: 1;
  min-height: 0;
`;
const DiskTree = styled.ul`
  flex: none;
  width: 100px;
  margin: 0;
  padding: 1px 0 0;
  border: 2px solid #8fbbe9;
  border-width: 2px 2px 0 0;
  background: #fff;
  list-style: none;
`;
const ManagerMain = styled.div`
  display: flex;
  flex: 1;
  flex-direction: column;
  padding-top: 1px;
`;
const CrossSplit = styled.div`
  display: flex;
  align-items: center;
  justify-content: center;
  height: 5px;
`;
const ManagerTable = styled(Table)`
  td { height: 13px; border-bottom: 1px solid #eee; border-right: 1px solid #f0f0f0; }
  td svg { margin: auto; }
`;
const Actions = styled.div`
  display: flex;
  justify-content: center;
  gap: 5px;
  height: 53px;
  padding-top: 3px;
  border: 1px solid #c8c8c8;
  border-bottom: 0;
`;
const Arrowhead = styled.i`
  margin-right: 2px;
  border: 3px solid transparent;
  border-bottom: 0;
  border-top: 4px solid #aaa;
`;
const tabsTop: [string, number][] = [['SuperTerminal', 90], ['PMeterpreter', 89], ['HttpProxy', 67], ['ByPassOpenBasedir', 120], ['PAttackFPM', 78], ['P_Eval_Code', 86], ['PortScan', 58], ['SocksProxy', 82], ['BypassDisableFunctions', 132], ['RealCmd', 67]];
const tabsBottom: [string, number][] = [['基础信息', 80], ['命令执行', 81], ['文件管理', 81], ['数据库管理', 94], ['笔记', 54], ['网络详情', 79], ['插件标签管理', 110], ['Zip', 47], ['PSuperServer', 114], ['PWebShellScan', 129]];
const disk: [string, number, boolean][] = [['Disk', 2, false], ['C:', 2, true], ['phpstudy_pro', 11, true], ['WWW', 20, true], ['DVWA', 30, true], ['hackable', 39, true], ['uploads', 57, false], ['D:', 11, false]];
const actions = ['上传', '移动', '刷新', '复制', '复制绝对路径', '删除文件', '新建文件', '新建文件夹', '下载', '文件属性', '远程下载', '执行', '大文件上传', '大文件下载'];
const PaperIcon = () => <svg width="7" height="9" viewBox="0 0 14 18" aria-hidden="true"><path d="M1 1h12v16H1z" fill="#ececec" stroke="#aaa" /><path d="M3 5h8M3 8h8M3 11h8M3 14h6" stroke="#999" /></svg>;

function FileManager() {
  return (
    <Manager>
      <WindowBar $h={14}>
        <JavaIcon /><WindowTitle $left={5} $c="#000">Url:http://192.168.23.128/dvwa/hackable/uploads/gsl.php Payload:PhpDynamicPayload Cryption:PHP_EVAL_XOR_BASE64 openCache:true useCache:false</WindowTitle>
        <Controls $c="#000"><MinIcon /><MaxIcon /><CloseX /></Controls>
      </WindowBar>
      <ToolTabs>{tabsTop.map(([t, g]) => <ToolTab key={t} $g={g}>{t}</ToolTab>)}</ToolTabs>
      <ToolTabs $last>{tabsBottom.map(([t, g], i) => <ToolTab key={t} $g={g} $hover={i === 1} $on={i === 2}>{t}</ToolTab>)}</ToolTabs>
      <ManagerBody>
        <DiskTree>
          {disk.map(([t, n, open]) => (
            <TreeRow key={t} $in={n} $bg={t === 'uploads' ? '#2675bf' : undefined} $c={t === 'uploads' ? '#fff' : undefined}>
              {open && <Arrowhead />}<FolderIcon open={open || t === 'Disk'} />{t}
            </TreeRow>
          ))}
        </DiskTree>
        <Splitter><Grips /></Splitter>
        <ManagerMain>
          <Field aria-label="路径" defaultValue="C:/phpstudy_pro/WWW/DVWA/hackable/uploads/" />
          <CrossSplit><Grips across /></CrossSplit>
          <TablePane>
            <ManagerTable>
              <colgroup><col width="17" /><col /><col /><col /><col /><col /></colgroup>
              <thead><tr>{['icon', 'name', 'type', 'lastModified', 'size', 'permission'].map(c => <th key={c} scope="col">{c}</th>)}</tr></thead>
              <tbody>
                <tr><td><PaperIcon /></td><td>dvwa_email.png</td><td>file</td><td>2019-02-06 16:11:22</td><td>667</td><td>RW</td></tr>
                <tr><td><PaperIcon /></td><td>gsl.php</td><td>file</td><td>2023-03-18 18:55:27</td><td>30</td><td>RW</td></tr>
              </tbody>
            </ManagerTable>
          </TablePane>
          <CrossSplit><Grips across /></CrossSplit>
          <Actions>{actions.map(t => <Btn key={t}>{t}</Btn>)}</Actions>
        </ManagerMain>
      </ManagerBody>
    </Manager>
  );
}

/* ---------- page ---------- */

const Blank = styled.div`
  flex: 1;
  background: #fff;
`;
const PAGE_TITLE = 'Vulnerability: File Upload :: Damn';

export default function App() {
  return (
    <>
      <Global />
      <Article>
        <Step n={1} w={991} h={488} notes={[['打开目标靶场', 601, 255, 0, 19]]}>
          <Chrome title={PAGE_TITLE} path="/dvwa/vulnerabilities/upload/" thumb={281}><Dvwa id="f1" /></Chrome>
        </Step>

        <Step n={2} w={566} h={301}
          arrows={[[102, 87, 49, 9], [380, 114, 350, 119], [384, 136, 349, 142], [386, 159, 346, 159], [385, 177, 343, 179], [218, 255, 216, 205]]}
          notes={[['点击再点生成', 88, 51, 62, 10], ['打开哥斯拉', 235, 46, 0, 10], ['填入密码和key记住后边要用', 463, 119], ['选择和目标网站相匹配的脚本类型', 477, 155], ['加密方式也是后边要用', 472, 179], ['点击生成', 227, 232, 87, 10]]}>
          <Godzilla>
            <Dialog title="GenerateShell" x={145} y={87} w={274} h={129}>
              <GenGrid onSubmit={e => e.preventDefault()}>
                <GenLabel htmlFor="g-pass">密码</GenLabel><GenInputCell><Field id="g-pass" defaultValue="pass" /></GenInputCell>
                <GenLabel htmlFor="g-key">密钥</GenLabel><GenInputCell><Field id="g-key" defaultValue="key" /></GenInputCell>
                <GenLabel htmlFor="g-payload">有效载荷</GenLabel><Select id="g-payload" value="PhpDynamicPayload" w={101} focus />
                <GenLabel htmlFor="g-crypt">加密器</GenLabel><Select id="g-crypt" value="PHP_EVAL_XOR_BASE64" w={103} />
                <GenButtons><Btn type="button">生成</Btn><Btn type="button">取消</Btn></GenButtons>
              </GenGrid>
            </Dialog>
          </Godzilla>
        </Step>

        <Step n={3} w={304} h={182} arrows={[[481, 100, 299, 101]]} notes={[['选择一个位置存储一句话', 389, 90]]}>
          <FileChooser />
        </Step>

        <Step n={4} w={563} h={300} arrows={[[482, 148, 386, 167]]} notes={[['提示成功', 432, 147, -11, 10]]}>
          <Godzilla extra={3}>
            <Dialog title="GenerateShell" x={145} y={87} w={274} h={129} muted>
              <Spacer />
              <BottomButtons><Btn $focus>生成</Btn><Btn>取消</Btn></BottomButtons>
            </Dialog>
            <Tip x={190} y={118} w={183} text="success! save file to -> E:\Godzilla\gsl.php" />
          </Godzilla>
        </Step>

        <Step n={5} w={989} h={524}
          arrows={[[783, 130, 732, 159, 13], [286, 242, 338, 233], [290, 299, 359, 263], [750, 334, 631, 288]]}
          notes={[['点击上传', 311, 228, -13, 10], ['点击上传', 321, 271, -33, 10], ['选择刚才生成的一句话', 694, 301, 24, 10]]}>
          <Chrome title={PAGE_TITLE} path="/dvwa/vulnerabilities/upload/" extra={2} dim thumb={281}><Dvwa id="f5" /></Chrome>
          <SystemOpen />
        </Step>

        <Step n={6} w={986} h={457} lines={[[329, 488, 294]]} notes={[['提示了上传路径', 531, 301]]}>
          <Chrome title={PAGE_TITLE} path="/dvwa/vulnerabilities/upload/#" extra={5} thumb={281}>
            <Dvwa id="f6" result="../../hackable/uploads/gsl.php succesfully uploaded!" />
          </Chrome>
        </Step>

        <Step n={7} w={726} h={154} lines={[[183, 433, 45]]} notes={[['我们访问一下看是否可以访问到', 336, 110]]}>
          <Chrome title="192.168.23.128/dvwa/hackable/u" path="/dvwa/hackable/uploads/gsl.php" extra={265} shift={3} icon={<GlobeIcon />}><Blank /></Chrome>
        </Step>

        <Step n={8} w={564} h={305}
          arrows={[[80, 72, 27, 9], [432, 69, 348, 77], [438, 90, 341, 95], [438, 106, 343, 109], [414, 230, 345, 240], [419, 251, 351, 261]]}
          notes={[['点击目标添加', 61, 34, 50, 10], ['填入访问的url', 389, 63, -6], ['输入生成时的密码和密钥', 495, 93, -5], ['配置先前的脚本类型和加密方式', 501, 239]]}>
          <Godzilla extra={2} dy={1}>
            <ShellSetting id="s8" x={132} y={30} focus="test" />
            <Tip x={355} y={125} w={136} text="Success!" />
          </Godzilla>
        </Step>

        <Step n={9} w={558} h={299}
          arrows={[[95, 305, 193, 284], [410, 294, 315, 283], [523, 206, 482, 164]]}
          notes={[['测试成功后点击添加', 142, 285, -12], ['点击测试', 363, 279, 5, 10], ['提示成功', 509, 178, 43, 10]]}>
          <Godzilla extra={8} dx={-1} dy={-2}>
            <ShellSetting id="s9" x={131} y={28} focus="add" />
            <Tip x={398} y={105} w={137} text="添加成功" />
          </Godzilla>
        </Step>

        <Step n={10} w={565} h={305} arrows={[[455, 97, 282, 48]]} notes={[['选中点击右键点进入', 371, 63, 16, 10]]}>
          <Godzilla extra={1} dy={1} active members={1}>
            <Menu>{['进入', '进入缓存', '复制选中', '移除', '编辑', '刷新'].map((t, i) => <li key={t}><MenuItem $on={i === 0}>{t}</MenuItem></li>)}</Menu>
          </Godzilla>
        </Step>

        <Step n={11} w={869} h={344} arrows={[[247, 65, 210, 42, 10]]} notes={[['成功进入', 250, 179, 0, 10]]}>
          <FileManager />
        </Step>
      </Article>
    </>
  );
}
